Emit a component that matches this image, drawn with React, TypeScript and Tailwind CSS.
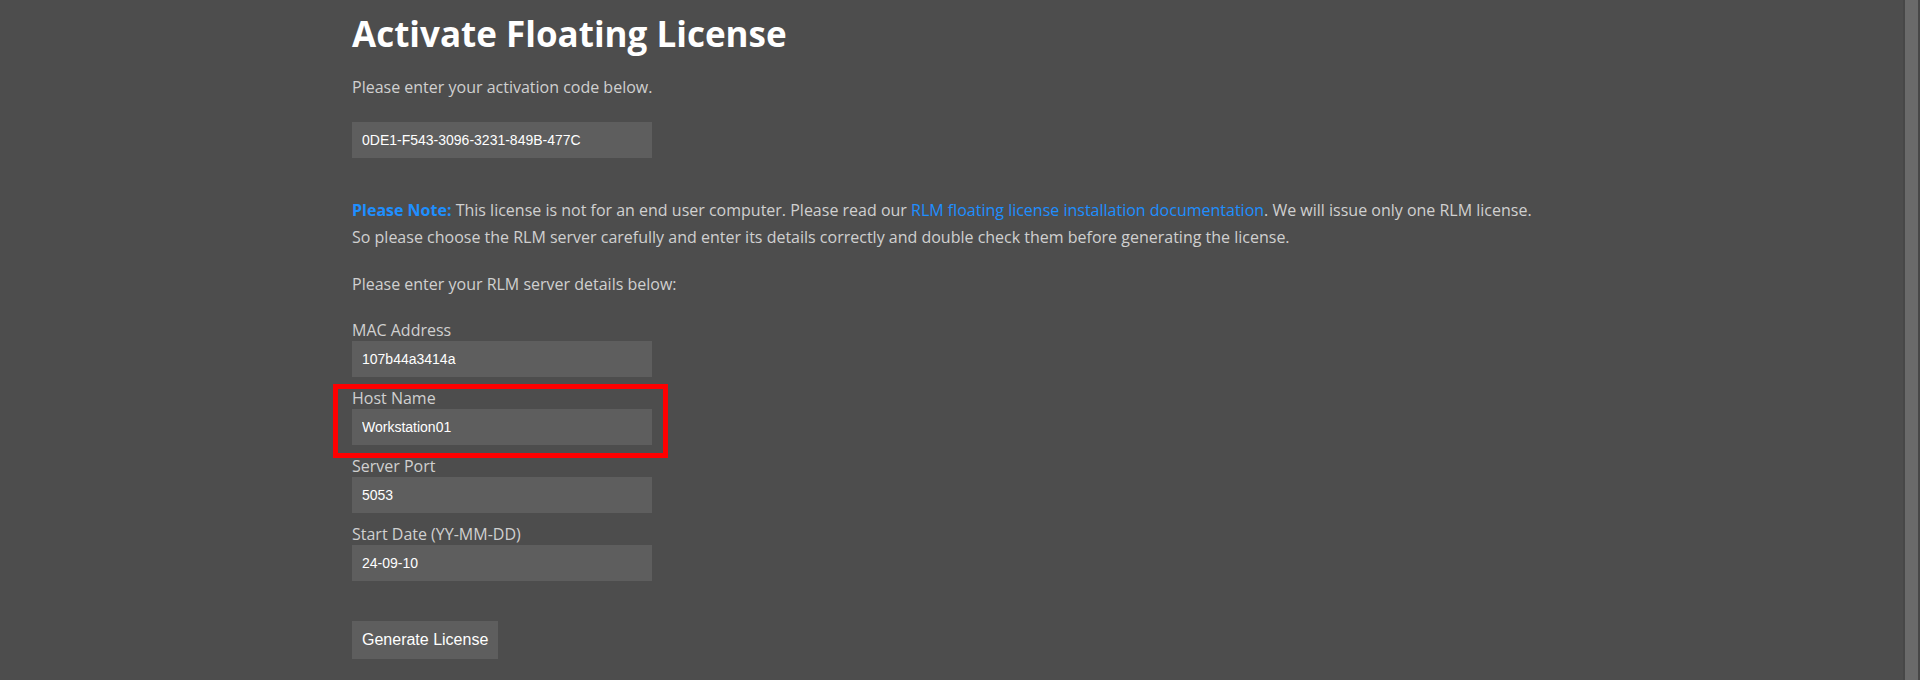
import React from "react";

const Field = ({
  label,
  value,
  highlight = false,
}: {
  label: string;
  value: string;
  highlight?: boolean;
}) => {
  return (
    <div className="relative flex flex-col">
      <label className="text-[16px] leading-[22px] text-[#d0d0d0]">{label}</label>
      <input
        readOnly
        defaultValue={value}
        className="h-[36px] w-[300px] border-0 bg-[#5e5e5e] px-[10px] font-['Liberation_Sans',Arial,sans-serif] text-[14px] text-white outline-none"
      />
      {highlight && (
        <div className="pointer-events-none absolute -top-[3px] -left-[19px] h-[74px] w-[335px] border-[5px] border-[#ff0000]" />
      )}
    </div>
  );
};

export default function App() {
  return (
    <div className="flex h-[680px] w-full overflow-hidden bg-[#4d4d4d] font-['Open_Sans',sans-serif]">
      <div className="flex-1 pl-[352px] pt-[14px]">
        <h1 className="text-[35px] leading-[40px] font-bold text-white">Activate Floating License</h1>
        <p className="mt-[20px] text-[16px] leading-[27px] text-[#d0d0d0]">
          Please enter your activation code below.
        </p>
        <input
          readOnly
          defaultValue="0DE1-F543-3096-3231-849B-477C"
          className="mt-[21px] h-[36px] w-[300px] border-0 bg-[#5e5e5e] px-[10px] font-['Liberation_Sans',Arial,sans-serif] text-[14px] text-white outline-none"
        />
        <p className="mt-[39px] text-[16px] leading-[27px] text-[#d0d0d0]">
          <span className="font-bold text-[#1e8fff]">Please Note:</span> This license is not for an end
          user computer. Please read our{" "}
          <a className="text-[#1e8fff]">RLM floating license installation documentation</a>. We will
          issue only one RLM license.
          <br />
          So please choose the RLM server carefully and enter its details correctly and double check
          them before generating the license.
        </p>
        <p className="mt-[20px] text-[16px] leading-[27px] text-[#d0d0d0]">
          Please enter your RLM server details below:
        </p>
        <div className="mt-[21px] flex flex-col gap-[10px]">
          <Field label="MAC Address" value="107b44a3414a" />
          <Field label="Host Name" value="Workstation01" highlight />
          <Field label="Server Port" value="5053" />
          <Field label="Start Date (YY-MM-DD)" value="24-09-10" />
        </div>
        <button className="mt-[40px] h-[38px] bg-[#5e5e5e] px-[10px] font-['Liberation_Sans',Arial,sans-serif] text-[16px] text-white">
          Generate License
        </button>
      </div>
      <div className="flex w-[17px] bg-[#474747] pl-[2px] pr-[2px]">
        <div className="w-[13px] bg-[#6a6a6a]" />
      </div>
    </div>
  );
}
